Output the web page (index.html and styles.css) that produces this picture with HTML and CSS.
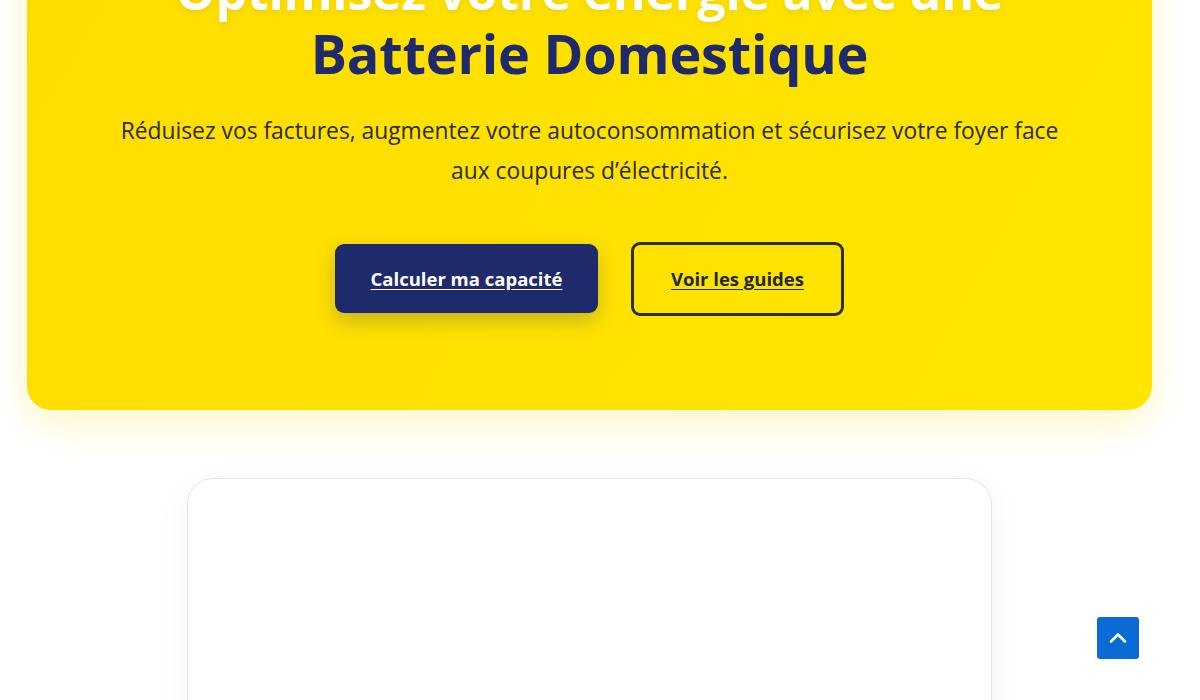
FILE: index.html
```html
<!DOCTYPE html>
<html lang="fr">
<head>
  <meta charset="utf-8">
  <meta name="viewport" content="width=device-width, initial-scale=1">
  <title>Batterie domestique — Optimisez votre énergie</title>
  <link rel="stylesheet" href="styles.css">
  <script src="script.js" defer></script>
</head>
<body id="top">
  <div class="promo-bar">Livraison et installation offertes sur toutes les batteries jusqu’au 30 juin</div>

  <header class="site-header">
    <a class="brand" href="#top">Batterie<span class="brand-accent">Maison</span></a>
    <nav class="main-nav">
      <a href="#calculateur">Calculateur</a>
      <a href="#guides">Guides</a>
      <a href="#faq">FAQ</a>
      <a href="#contact">Contact</a>
    </nav>
  </header>

  <nav class="breadcrumb">
    <a href="#top">Accueil</a>
    <span class="breadcrumb-sep">/</span>
    <span>Batterie domestique</span>
  </nav>

  <main class="page">
    <section class="hero">
      <span class="hero-badge">Guide complet 2025</span>
      <h1 class="hero-title">
        <span class="hero-title-light">Optimisez votre énergie avec une</span>
        <span class="hero-title-accent">Batterie Domestique</span>
      </h1>
      <p class="hero-lead">Réduisez vos factures, augmentez votre autoconsommation et sécurisez votre foyer face aux coupures d’électricité.</p>
      <div class="hero-actions">
        <a class="btn btn-primary" href="#calculateur">Calculer ma capacité</a>
        <a class="btn btn-outline" href="#guides">Voir les guides</a>
      </div>
    </section>

    <section class="calculator" id="calculateur">
      <div class="calculator-card">
        <div class="calculator-frame" aria-label="Simulateur de capacité de batterie"></div>
      </div>
    </section>

    <section class="guides" id="guides">
      <h2 class="section-title">Nos guides</h2>
      <div class="guides-grid">
        <article class="guide-card">
          <h3>Choisir sa capacité</h3>
          <p>Dimensionner une batterie selon sa consommation et sa production solaire.</p>
        </article>
        <article class="guide-card">
          <h3>Lithium ou plomb ?</h3>
          <p>Durée de vie, sécurité et coût : comparer les technologies.</p>
        </article>
        <article class="guide-card">
          <h3>Aides et primes</h3>
          <p>Les dispositifs disponibles pour financer votre installation.</p>
        </article>
      </div>
    </section>

    <section class="faq" id="faq">
      <h2 class="section-title">Questions fréquentes</h2>
      <details class="faq-item"><summary>Une batterie est-elle rentable ?</summary><p>Tout dépend du taux d’autoconsommation et du tarif de rachat.</p></details>
      <details class="faq-item"><summary>Quelle durée de vie prévoir ?</summary><p>Entre 10 et 15 ans pour une batterie lithium-fer-phosphate.</p></details>
      <details class="faq-item"><summary>Fonctionne-t-elle pendant une coupure ?</summary><p>Oui, avec un onduleur hybride équipé d’une fonction de secours.</p></details>
      <details class="faq-item"><summary>Faut-il des panneaux solaires ?</summary><p>Non, une batterie peut aussi stocker l’électricité des heures creuses.</p></details>
    </section>
  </main>

  <footer class="site-footer" id="contact">
    <p>© 2025 BatterieMaison — Conseils indépendants sur le stockage d’énergie</p>
  </footer>

  <a class="back-to-top" href="#top" aria-label="Revenir en haut">
    <svg viewBox="0 0 24 24" width="24" height="24" fill="none" stroke="currentColor" stroke-width="2.6" stroke-linecap="round" stroke-linejoin="round"><path d="M5 15.5l7-7 7 7"/></svg>
  </a>
</body>
</html>
```

FILE: styles.css
```css
*,
*::before,
*::after {
  box-sizing: border-box;
}

html {
  font-family: "Open Sans", "Noto Sans", sans-serif;
}

body {
  margin: 0;
  background: #ffffff;
  color: #2b2b2b;
}

/* Top of page */
.promo-bar {
  height: 40px;
  display: flex;
  align-items: center;
  justify-content: center;
  background: #1e2a6c;
  color: #ffffff;
  font-size: 14px;
}

.site-header {
  height: 84px;
  display: flex;
  align-items: center;
  justify-content: space-between;
  padding: 0 48px 0 27px;
  border-bottom: 1px solid #eeeeee;
}

.brand {
  font-size: 24px;
  font-weight: 800;
  color: #1e2a6c;
  text-decoration: none;
}

.brand-accent {
  color: #f2c500;
}

.main-nav {
  display: flex;
  gap: 28px;
}

.main-nav a {
  color: #2b2b2b;
  text-decoration: none;
  font-weight: 600;
}

.breadcrumb {
  height: 56px;
  display: flex;
  align-items: center;
  gap: 8px;
  padding: 0 48px 0 27px;
  font-size: 14px;
  color: #777777;
}

.breadcrumb a {
  color: #1e2a6c;
}

/* Main column */
.page {
  padding: 32px 48px 80px 27px;
}

/* Hero */
.hero {
  display: flex;
  flex-direction: column;
  align-items: center;
  padding: 110px 40px 94px;
  border-radius: 24px;
  background: linear-gradient(120deg, #ffdc00 0%, #ffe200 55%, #ffe600 100%);
  box-shadow: 0 14px 40px rgba(255, 214, 0, 0.22);
  text-align: center;
}

.hero-badge {
  height: 38px;
  margin-bottom: 28px;
  padding: 0 18px;
  display: inline-flex;
  align-items: center;
  border-radius: 19px;
  background: rgba(255, 255, 255, 0.5);
  color: #1e2a6c;
  font-weight: 700;
}

.hero-title {
  margin: 0;
  font-size: 54px;
  line-height: 1.2;
  font-weight: 700;
  letter-spacing: -0.2px;
}

.hero-title-light {
  display: block;
  font-size: 50px;
  color: #ffffff;
  text-shadow: 0 2px 6px rgba(0, 0, 0, 0.08);
}

.hero-title-accent {
  display: block;
  color: #1e2a6c;
}

.hero-lead {
  max-width: 970px;
  margin: 25px 0 0;
  font-size: 22.8px;
  line-height: 40px;
  color: #2b2b2b;
}

.hero-actions {
  display: flex;
  align-items: center;
  gap: 33px;
  margin-top: 51px;
}

.btn {
  display: inline-flex;
  align-items: center;
  justify-content: center;
  font-size: 18.5px;
  line-height: 25px;
  font-weight: 700;
  text-decoration: underline;
  text-underline-offset: 3px;
  border-radius: 9px;
}

.btn-primary {
  padding: 22px 35.5px;
  background: #1e2a6c;
  color: #ffffff;
  box-shadow: 0 8px 20px rgba(30, 42, 108, 0.25);
}

.btn-outline {
  padding: 21.5px 37px;
  border: 3px solid #2e2e2e;
  color: #23273d;
}

/* Calculator */
.calculator {
  display: flex;
  justify-content: center;
  margin-top: 68px;
}

.calculator-card {
  width: 805px;
  border: 1px solid #e6e6e6;
  border-radius: 26px;
  background: #ffffff;
  box-shadow: 0 10px 36px rgba(0, 0, 0, 0.05);
}

.calculator-frame {
  min-height: 1060px;
}

/* Guides and FAQ */
.section-title {
  margin: 0 0 32px;
  text-align: center;
  font-size: 34px;
  color: #1e2a6c;
}

.guides {
  margin-top: 100px;
}

.guides-grid {
  display: grid;
  grid-template-columns: repeat(3, 1fr);
  gap: 28px;
}

.guide-card {
  min-height: 340px;
  padding: 32px;
  border: 1px solid #e6e6e6;
  border-radius: 20px;
}

.guide-card h3 {
  margin: 0 0 12px;
  color: #1e2a6c;
}

.faq {
  max-width: 805px;
  margin: 100px auto 0;
}

.faq-item {
  padding: 24px 0;
  border-bottom: 1px solid #e6e6e6;
}

.faq-item summary {
  font-weight: 700;
  font-size: 18px;
}

.site-footer {
  height: 300px;
  display: flex;
  align-items: center;
  justify-content: center;
  background: #1e2a6c;
  color: #ffffff;
}

/* Floating shortcut */
.back-to-top {
  position: fixed;
  right: 61px;
  bottom: 41px;
  width: 42px;
  height: 42px;
  display: flex;
  align-items: center;
  justify-content: center;
  border-radius: 3px;
  background: #0b6bd4;
  color: #ffffff;
}
```

FILE: script.js
```js
// Open the page on the hero's call-to-action area, with the calculator card peeking below.
(function () {
  if ("scrollRestoration" in history) {
    history.scrollRestoration = "manual";
  }

  function revealHero() {
    var hero = document.querySelector(".hero");
    if (!hero) return;
    var bottom = hero.getBoundingClientRect().bottom + window.scrollY;
    window.scrollTo(0, Math.round(bottom - 410));
  }

  revealHero();
  window.addEventListener("load", revealHero);
})();
```
